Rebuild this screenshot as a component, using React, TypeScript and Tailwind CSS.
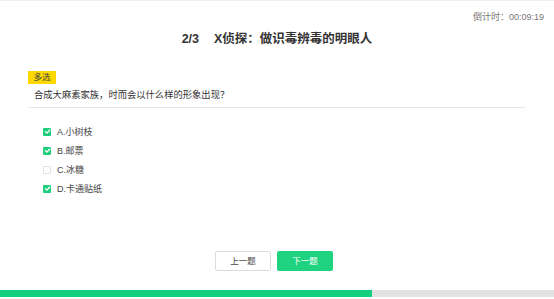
import React from 'react';

interface Option {
  key: string;
  label: string;
  checked: boolean;
}

const options: Option[] = [
  { key: 'A', label: '小树枝', checked: true },
  { key: 'B', label: '邮票', checked: true },
  { key: 'C', label: '冰糖', checked: false },
  { key: 'D', label: '卡通贴纸', checked: true },
];

const font = { fontFamily: '"Liberation Sans", "Noto Sans CJK SC", sans-serif' };

const CheckBox: React.FC<{ checked: boolean }> = ({ checked }) =>
  checked ? (
    <span className="flex h-[8px] w-[8px] items-center justify-center rounded-[1px] bg-[#1fcf7c]">
      <svg width="7" height="7" viewBox="0 0 10 10" fill="none">
        <path d="M2 5.2 L4.2 7.3 L8.2 2.8" stroke="white" strokeWidth="1.8" strokeLinecap="round" strokeLinejoin="round" />
      </svg>
    </span>
  ) : (
    <span className="h-[8px] w-[8px] rounded-[1px] border border-[#e2e2e2] bg-white" />
  );

const App: React.FC = () => {
  return (
    <div style={font} className="flex h-[299px] w-full flex-col border-t border-[#f0f0f0] bg-white text-[#333]">
      {/* countdown */}
      <div className="pt-[10px] pr-[10px] text-right text-[9px] leading-[12px] text-[#777]">
        倒计时：00:09:19
      </div>

      {/* title */}
      <div className="mt-[8px] flex justify-center text-[12.5px] font-bold leading-[16px] text-[#333]">
        <span className="mr-[15px]">2/3</span>
        <span>X侦探：做识毒辨毒的明眼人</span>
      </div>

      {/* question */}
      <div className="mt-[24px] pl-[28px] pr-[29px]">
        <span className="flex h-[13px] w-[28px] items-center justify-center bg-[#fcd800] text-[8.5px] leading-none text-[#444]">
          多选
        </span>
        <div className="mt-[5px] border-b border-[#e6e6e6] pb-[6px] pl-[6px] text-[9.3px] leading-[12px] text-[#333]">
          合成大麻素家族，时而会以什么样的形象出现？
        </div>
        <div className="mt-[14px] pl-[15px]">
          {options.map(opt => (
            <div key={opt.key} className="flex h-[19px] items-center gap-[6px]">
              <CheckBox checked={opt.checked} />
              <span className="text-[9px] leading-[12px] text-[#444]">
                {opt.key}.{opt.label}
              </span>
            </div>
          ))}
        </div>
      </div>

      {/* buttons */}
      <div className="mt-[53px] flex justify-center gap-[6px] pr-[6px]">
        <button className="h-[20px] w-[56px] rounded-[2px] border border-[#dcdcdc] bg-white text-[8.5px] text-[#444]">
          上一题
        </button>
        <button className="h-[20px] w-[56px] rounded-[2px] bg-[#1fd27f] text-[8.5px] text-white">
          下一题
        </button>
      </div>

      {/* progress */}
      <div className="mt-[19px] h-[7px] w-full bg-[#e2e2e2]">
        <div className="h-full bg-[#14cf7d]" style={{ width: `${(372 / 554) * 100}%` }} />
      </div>
    </div>
  );
};

export default App;
